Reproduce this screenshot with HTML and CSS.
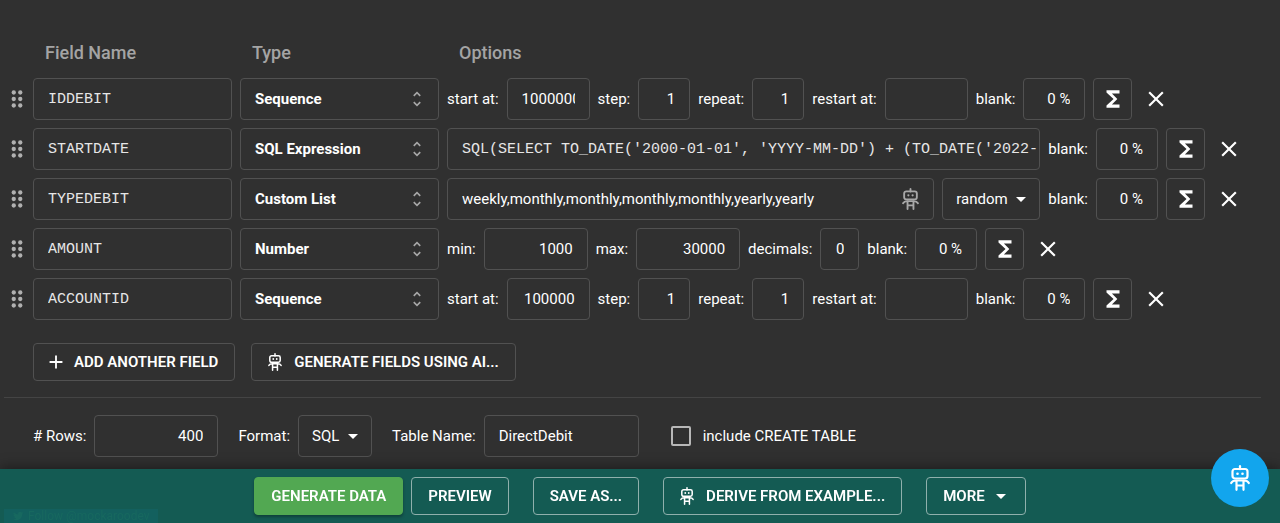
FILE: index.html
```html
<!DOCTYPE html>
<html lang="en">
<head>
<meta charset="utf-8">
<title>Schema</title>
<link rel="stylesheet" href="styles.css">
</head>
<body>
<svg class="sprite" aria-hidden="true">
  <symbol id="drag" viewBox="0 0 24 24"><circle cx="9" cy="6" r="2"/><circle cx="15" cy="6" r="2"/><circle cx="9" cy="12" r="2"/><circle cx="15" cy="12" r="2"/><circle cx="9" cy="18" r="2"/><circle cx="15" cy="18" r="2"/></symbol>
  <symbol id="unfold" viewBox="0 0 24 24"><path d="M12 5.83 15.17 9l1.41-1.41L12 3 7.41 7.59 8.83 9 12 5.83zm0 12.34L8.83 15l-1.41 1.41L12 21l4.59-4.59L15.17 15 12 18.17z"/></symbol>
  <symbol id="sigma" viewBox="0 0 24 24"><path d="M18 4H6v2l6.500 6L6 18v2h12v-3h-7l5-5-5-5h7z"/></symbol>
  <symbol id="close" viewBox="0 0 24 24"><path d="M19 6.410 17.590 5 12 10.590 6.410 5 5 6.410 10.590 12 5 17.590 6.410 19 12 13.410 17.590 19 19 17.590 13.410 12z"/></symbol>
  <symbol id="plus" viewBox="0 0 24 24"><path d="M19 13h-6v6h-2v-6H5v-2h6V5h2v6h6v2z"/></symbol>
  <symbol id="caret" viewBox="0 0 24 24"><path d="M7 10l5 5 5-5z"/></symbol>
  <symbol id="bird" viewBox="0 0 24 24"><path d="M22.5 5.800a8.500 8.500 0 0 1-2.400.65 4.200 4.200 0 0 0 1.850-2.300 8.400 8.400 0 0 1-2.650 1A4.200 4.200 0 0 0 12.100 9 11.900 11.900 0 0 1 3.500 4.600a4.200 4.200 0 0 0 1.300 5.600 4.200 4.200 0 0 1-1.900-.5 4.200 4.200 0 0 0 3.350 4.150 4.200 4.200 0 0 1-1.900.07 4.200 4.200 0 0 0 3.900 2.900A8.400 8.400 0 0 1 2 18.600 11.900 11.900 0 0 0 20.400 8a8.500 8.500 0 0 0 2.100-2.200z"/></symbol>
  <symbol id="bot" viewBox="0 0 20 26"><g fill="none" stroke="currentColor" stroke-width="2.200" stroke-linecap="round" stroke-linejoin="round"><path d="M10 1.200v3"/><rect x="2.500" y="4" width="15" height="9.500" rx="2.500"/><path d="M6.500 24.800V15.500h7v9.300M6.500 20.500h7M6 15.500C3.500 15.500 2 16.500 1.200 18M14 15.500c2.500 0 4 1 4.800 2.500"/></g><circle cx="7.500" cy="8.700" r="1.300"/><circle cx="12.500" cy="8.700" r="1.300"/></symbol>
</svg>

<main class="schema">
  <div class="headings"><span class="heading">Field Name</span><span class="heading">Type</span><span class="heading">Options</span></div>
  <div class="fields">
    <div class="field-row">
      <svg class="icon drag"><use href="#drag"/></svg>
      <input class="box name mono" aria-label="Field name" value="IDDEBIT">
      <button class="box type">Sequence<svg class="icon unfold"><use href="#unfold"/></svg></button>
      <label for="start1">start at:</label><input class="box num medium" id="start1" value="1000000">
      <label for="step1">step:</label><input class="box num small" id="step1" value="1">
      <label for="repeat1">repeat:</label><input class="box num small" id="repeat1" value="1">
      <label for="restart1">restart at:</label><input class="box num medium" id="restart1">
      <label for="blank1">blank:</label><input class="box num percent" id="blank1" value="0 %">
      <button class="box formula" aria-label="Formula"><svg class="icon"><use href="#sigma"/></svg></button>
      <button class="remove" aria-label="Remove field"><svg class="icon"><use href="#close"/></svg></button>
    </div>
    <div class="field-row">
      <svg class="icon drag"><use href="#drag"/></svg>
      <input class="box name mono" aria-label="Field name" value="STARTDATE">
      <button class="box type">SQL Expression<svg class="icon unfold"><use href="#unfold"/></svg></button>
      <input class="box mono expression" aria-label="SQL expression" value="SQL(SELECT TO_DATE('2000-01-01', 'YYYY-MM-DD') + (TO_DATE('2022-">
      <label for="blank2">blank:</label><input class="box num percent" id="blank2" value="0 %">
      <button class="box formula" aria-label="Formula"><svg class="icon"><use href="#sigma"/></svg></button>
      <button class="remove" aria-label="Remove field"><svg class="icon"><use href="#close"/></svg></button>
    </div>
    <div class="field-row">
      <svg class="icon drag"><use href="#drag"/></svg>
      <input class="box name mono" aria-label="Field name" value="TYPEDEBIT">
      <button class="box type">Custom List<svg class="icon unfold"><use href="#unfold"/></svg></button>
      <div class="box values"><input class="bare" aria-label="List values" value="weekly,monthly,monthly,monthly,monthly,yearly,yearly"><button class="suggest" aria-label="Suggest values"><svg class="bot"><use href="#bot"/></svg></button></div>
      <div class="picker order"><select class="box" aria-label="Order"><option>random</option></select><svg class="icon caret"><use href="#caret"/></svg></div>
      <label for="blank3">blank:</label><input class="box num percent" id="blank3" value="0 %">
      <button class="box formula" aria-label="Formula"><svg class="icon"><use href="#sigma"/></svg></button>
      <button class="remove" aria-label="Remove field"><svg class="icon"><use href="#close"/></svg></button>
    </div>
    <div class="field-row">
      <svg class="icon drag"><use href="#drag"/></svg>
      <input class="box name mono" aria-label="Field name" value="AMOUNT">
      <button class="box type">Number<svg class="icon unfold"><use href="#unfold"/></svg></button>
      <label for="min4">min:</label><input class="box num large" id="min4" value="1000">
      <label for="max4">max:</label><input class="box num large" id="max4" value="30000">
      <label for="dec4">decimals:</label><input class="box num tiny" id="dec4" value="0">
      <label for="blank4">blank:</label><input class="box num percent" id="blank4" value="0 %">
      <button class="box formula" aria-label="Formula"><svg class="icon"><use href="#sigma"/></svg></button>
      <button class="remove" aria-label="Remove field"><svg class="icon"><use href="#close"/></svg></button>
    </div>
    <div class="field-row">
      <svg class="icon drag"><use href="#drag"/></svg>
      <input class="box name mono" aria-label="Field name" value="ACCOUNTID">
      <button class="box type">Sequence<svg class="icon unfold"><use href="#unfold"/></svg></button>
      <label for="start5">start at:</label><input class="box num medium" id="start5" value="100000">
      <label for="step5">step:</label><input class="box num small" id="step5" value="1">
      <label for="repeat5">repeat:</label><input class="box num small" id="repeat5" value="1">
      <label for="restart5">restart at:</label><input class="box num medium" id="restart5">
      <label for="blank5">blank:</label><input class="box num percent" id="blank5" value="0 %">
      <button class="box formula" aria-label="Formula"><svg class="icon"><use href="#sigma"/></svg></button>
      <button class="remove" aria-label="Remove field"><svg class="icon"><use href="#close"/></svg></button>
    </div>
  </div>
  <div class="adders">
    <button class="button"><svg class="icon plus"><use href="#plus"/></svg>ADD ANOTHER FIELD</button>
    <button class="button"><svg class="bot"><use href="#bot"/></svg>GENERATE FIELDS USING AI...</button>
  </div>
  <hr class="rule">
  <div class="settings">
    <div class="setting"><label for="rows"># Rows:</label><input class="box num rows" id="rows" value="400"></div>
    <div class="setting"><label for="format">Format:</label><div class="picker format"><select class="box" id="format"><option>SQL</option></select><svg class="icon caret"><use href="#caret"/></svg></div></div>
    <div class="setting"><label for="table">Table Name:</label><input class="box table-name" id="table" value="DirectDebit"></div>
    <div class="setting check"><input class="tick" type="checkbox" id="create"><label for="create">include CREATE TABLE</label></div>
  </div>
</main>

<footer class="bar">
  <a class="follow" href="#"><svg class="bird"><use href="#bird"/></svg>Follow @mockaroodev</a>
  <div class="group">
    <button class="button generate">GENERATE DATA</button>
    <button class="button">PREVIEW</button>
  </div>
  <button class="button">SAVE AS...</button>
  <button class="button"><svg class="bot"><use href="#bot"/></svg>DERIVE FROM EXAMPLE...</button>
  <button class="button more">MORE<svg class="icon caret"><use href="#caret"/></svg></button>
</footer>
<button class="assistant" aria-label="Open assistant"><svg class="bot"><use href="#bot"/></svg></button>
</body>
</html>
```
FILE: styles.css
```css
* { box-sizing: border-box; }

body {
  margin: 0;
  background: #303030;
  color: #fff;
  font: 15px/20px Roboto, sans-serif;
  overflow-x: hidden;
}

input, select, button { font: inherit; color: inherit; margin: 0; }
button { cursor: pointer; background: none; border: 0; }
svg { fill: currentColor; flex: none; display: block; }
label { white-space: nowrap; }

.sprite { position: absolute; width: 0; height: 0; }
.icon { width: 26px; height: 26px; }
.bot { width: 14px; height: 18px; }
.caret { width: 24px; height: 24px; }

.schema { padding: 42px 36px 66px 4px; }

.headings {
  display: grid;
  grid-template-columns: 207px 207px 1fr;
  padding-left: 41px;
  margin-bottom: 14px;
}
.heading { font-size: 18px; line-height: 22px; font-weight: 500; color: #a4a4a4; }

.fields { display: flex; flex-direction: column; gap: 8px; }
.field-row { display: flex; align-items: center; gap: 8px; }
.drag { color: #b0b0b0; margin-right: -5px; }

.box {
  height: 42px;
  padding: 0 14px;
  border: 1px solid #515151;
  border-radius: 4px;
  background: transparent;
  outline: 0;
  flex: none;
}
.mono { font-family: "Courier New", "Liberation Mono", monospace; color: #e6e6e6; }
.name { width: 199px; }
.type {
  width: 199px;
  display: flex;
  align-items: center;
  justify-content: space-between;
  padding-right: 11px;
  font-weight: 700;
  text-align: left;
}
.unfold { width: 20px; height: 20px; color: #a8a8a8; }
.num { text-align: right; }
.tiny { width: 39px; }
.small { width: 52px; }
.percent { width: 62px; }
.medium { width: 83px; }
.large { width: 104px; }
.rows { width: 124px; }
.table-name { width: 155px; }

.expression { flex: 1; min-width: 0; padding-right: 2px; }
.values { flex: 1; min-width: 0; display: flex; align-items: center; }
.bare { flex: 1; min-width: 0; padding: 0; border: 0; background: none; outline: 0; }
.suggest { padding: 0; color: #a8a8a8; }
.suggest .bot { width: 17px; height: 22px; }

.formula { width: 39px; padding: 0; display: flex; align-items: center; justify-content: center; }
.remove { width: 31px; height: 31px; padding: 0; display: flex; align-items: center; justify-content: center; }

.picker { display: grid; align-items: center; flex: none; }
.picker > * { grid-area: 1 / 1; }
.picker select { width: 100%; appearance: none; padding-left: 13px; }
.picker .caret { justify-self: end; margin-right: 7px; pointer-events: none; }
.order { width: 98px; }
.format { width: 74px; }

.button {
  display: flex;
  align-items: center;
  gap: 12px;
  height: 38px;
  padding: 0 16px;
  border: 1px solid #515151;
  border-radius: 4px;
  font-weight: 600;
  white-space: nowrap;
}
.plus { width: 22px; height: 22px; margin: 0 -5px; }

.adders { display: flex; gap: 16px; padding: 23px 0 0 29px; }
.rule { height: 1px; margin: 16px -17px 17px 0; border: 0; background: #444; }

.settings { display: flex; align-items: center; gap: 20px; padding-left: 29px; }
.setting { display: flex; align-items: center; gap: 8px; }
.check { gap: 12px; padding-left: 12px; }
.tick { appearance: none; width: 20px; height: 20px; border: 2px solid #b8b8b8; border-radius: 2px; }

.bar {
  position: fixed;
  left: 0;
  right: 0;
  bottom: 0;
  display: flex;
  justify-content: center;
  gap: 24px;
  padding: 8px 0;
  background: #145b53;
  box-shadow: 0 -2px 12px rgba(0, 0, 0, 0.4);
}
.bar .button { border-color: #8fb0ac; }
.group { display: flex; gap: 8px; }
.bar .generate { background: #52a852; border-color: #52a852; box-shadow: 0 2px 3px rgba(0, 0, 0, 0.3); }
.bar .more { gap: 4px; }
.more .caret { margin-right: -4px; }

.follow {
  position: absolute;
  left: 4px;
  bottom: 0;
  display: flex;
  align-items: center;
  gap: 4px;
  padding: 0 8px;
  background: #13605e;
  color: #17685f;
  font-size: 12px;
  line-height: 14px;
  text-decoration: none;
}
.bird { width: 12px; height: 12px; }

.assistant {
  position: fixed;
  right: 11px;
  bottom: 16px;
  width: 58px;
  height: 58px;
  border-radius: 50%;
  padding: 0;
  display: flex;
  align-items: center;
  justify-content: center;
  background: #12a5ed;
}
.assistant .bot { width: 20px; height: 26px; }
```
